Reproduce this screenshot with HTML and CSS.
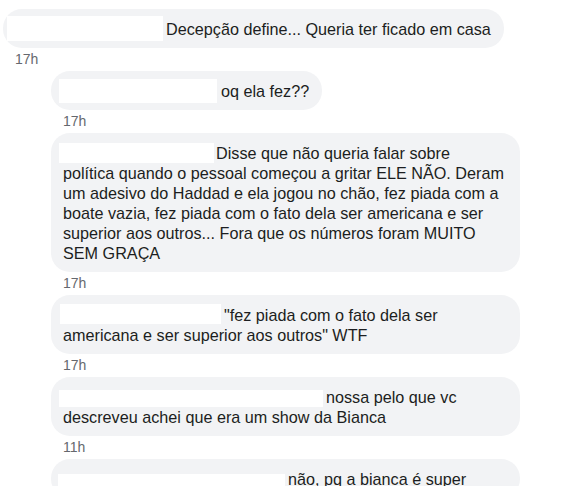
FILE: index.html
```html
<!DOCTYPE html>
<html lang="pt-BR">
<head>
<meta charset="utf-8">
<title>Comentários</title>
<link rel="stylesheet" href="styles.css">
</head>
<body>
<div class="thread">
  <div class="comment">
    <div class="bubble"><span class="redact r1"></span>Decepção define... Queria ter ficado em casa</div>
    <div class="time">17h</div>
  </div>
  <div class="replies">
    <div class="comment">
      <div class="bubble"><span class="redact r2"></span>oq ela fez??</div>
      <div class="time">17h</div>
    </div>
    <div class="comment">
      <div class="bubble bubble-wide"><span class="redact r3"></span>Disse que não queria falar sobre<br>política quando o pessoal começou a gritar ELE NÃO. Deram<br>um adesivo do Haddad e ela jogou no chão, fez piada com a<br>boate vazia, fez piada com o fato dela ser americana e ser<br>superior aos outros... Fora que os números foram MUITO<br>SEM GRAÇA</div>
      <div class="time">17h</div>
    </div>
    <div class="comment">
      <div class="bubble bubble-wide"><span class="redact r4"></span>"fez piada com o fato dela ser<br>americana e ser superior aos outros" WTF</div>
      <div class="time">17h</div>
    </div>
    <div class="comment">
      <div class="bubble bubble-wide"><span class="redact r5"></span>nossa pelo que vc<br>descreveu achei que era um show da Bianca</div>
      <div class="time">11h</div>
    </div>
    <div class="comment">
      <div class="bubble bubble-wide"><span class="redact r6"></span>não, pq a bianca é super</div>
    </div>
  </div>
</div>
</body>
</html>
```

FILE: styles.css
```css
html, body {
  margin: 0;
  padding: 0;
  background: #ffffff;
}

body {
  font-family: "Liberation Sans", Arial, Helvetica, sans-serif;
  color: #1c1e21;
  overflow: hidden;
}

.thread {
  padding: 9px 0 0 3px;
}

.comment {
  display: flex;
  flex-direction: column;
  align-items: flex-start;
}

.replies {
  margin-left: 48px;
}

.bubble {
  box-sizing: border-box;
  background: #f2f3f5;
  border-radius: 19px;
  padding: 10px 13px 9px 12px;
  font-size: 16.2px;
  line-height: 20px;
  white-space: nowrap;
}

.bubble-wide {
  width: 469px;
  white-space: normal;
}

.redact {
  display: inline-block;
  vertical-align: top;
  background: #ffffff;
}

.r1 { width: 156px; height: 25px; margin: -3px 3px -2px -8px; }
.r2 { width: 158px; height: 24px; margin: -2px 4px -2px -4px; }
.r3 { width: 155px; height: 20px; margin: 0 2px 0 -4px; }
.r4 { width: 161px; height: 20px; margin: -1px 3px 1px -3px; }
.r5 { width: 264px; height: 17px; margin: 3px 3px 0 -4px; }
.r6 { width: 227px; height: 20px; margin: 5px 3px -5px -5px; }

.time {
  height: 23px;
  line-height: 23px;
  padding-left: 12px;
  font-size: 14px;
  color: #65686e;
}
```
